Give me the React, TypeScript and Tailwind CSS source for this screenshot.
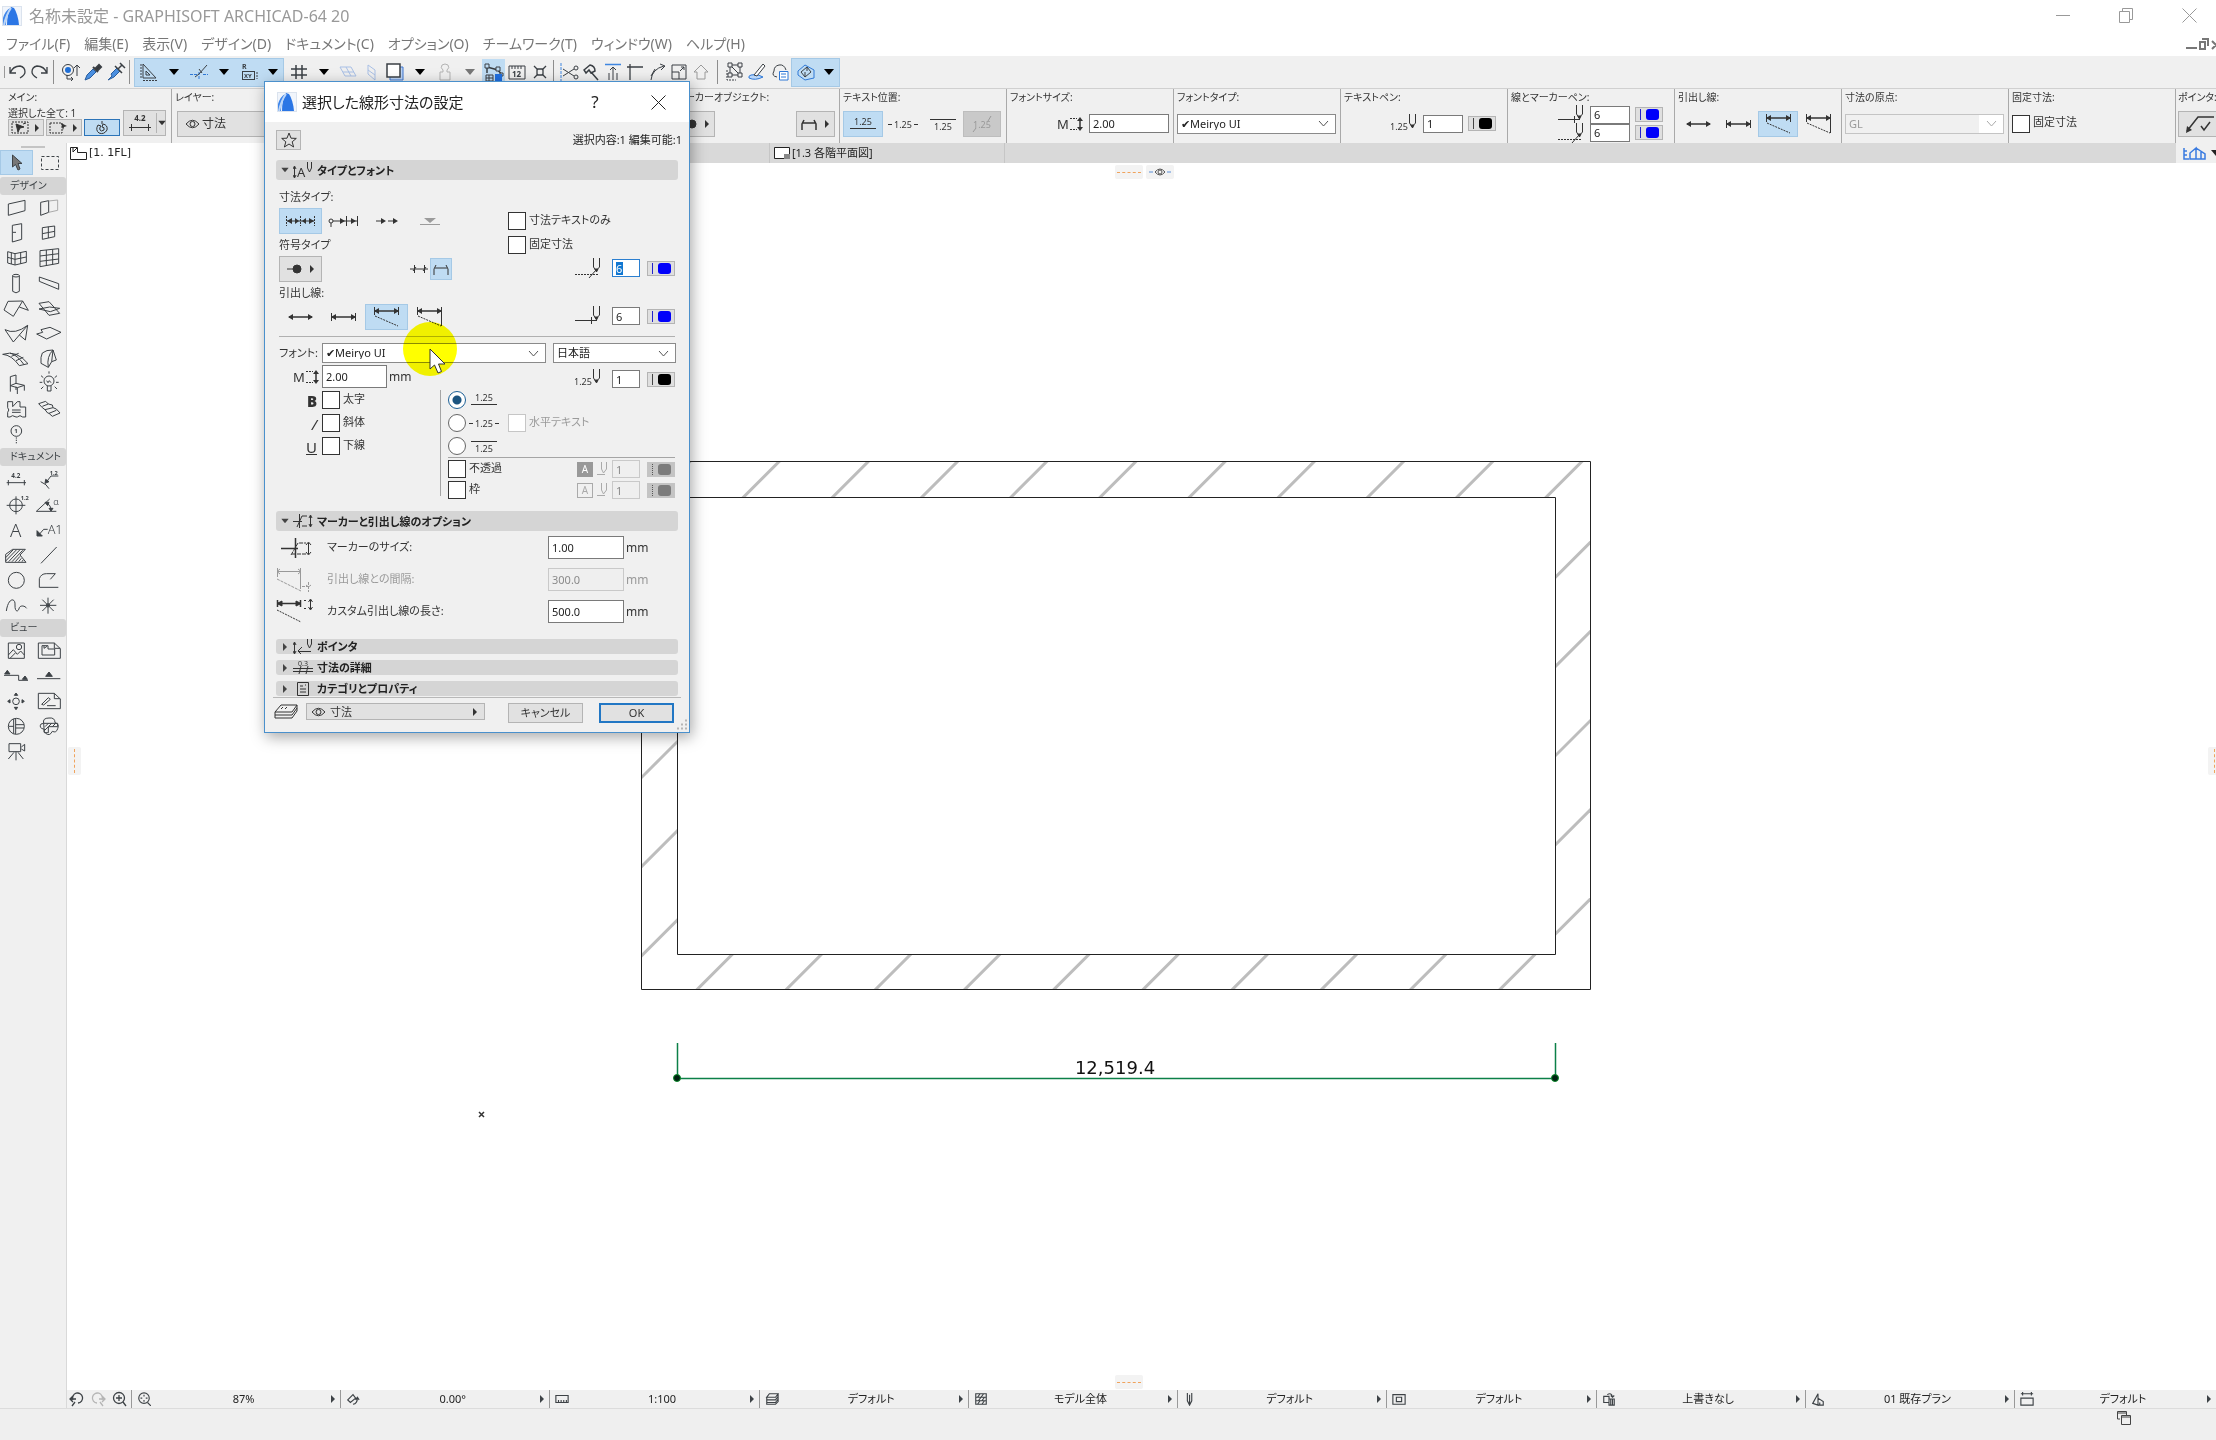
import React from 'react';
import clsx from 'clsx';

type Kids = { children?: React.ReactNode };

/* ---------- small helpers ---------- */

function Svg({ w, h, vb, className, sw = 1, children }: Kids & { w: number; h: number; vb?: string; className?: string; sw?: number }) {
  return (
    <svg
      width={w}
      height={h}
      viewBox={vb ?? `0 0 ${w} ${h}`}
      fill="none"
      stroke="currentColor"
      strokeWidth={sw}
      className={clsx('block shrink-0', className)}
      aria-hidden="true"
    >
      {children}
    </svg>
  );
}

function Tri({ dir = 'right', className }: { dir?: 'right' | 'down'; className?: string }) {
  return (
    <Svg w={10} h={10} className={className}>
      <path fill="currentColor" stroke="none" d={dir === 'right' ? 'M3 1L7 5L3 9Z' : 'M0 2H10L5 8Z'} />
    </Svg>
  );
}

function Logo() {
  return (
    <Svg w={20} h={20}>
      <rect x="0.5" y="0.5" width="19" height="19" fill="#f1f5fb" stroke="#dbe3ee" />
      <path d="M1 19V12Q3 5 8 2Q4 9 4 19Z" fill="#3f86ea" stroke="none" />
      <path d="M5 19Q5 8 9 1L12 2Q16 8 17 19Z" fill="#2b76e5" stroke="none" />
      <path d="M2 19Q4 9 9 2" stroke="#bcd6f8" strokeWidth="2" />
    </Svg>
  );
}

function Eye() {
  return (
    <Svg w={15} h={10}>
      <path d="M1 5Q7.500 -2.500 14 5Q7.500 12.500 1 5Z" />
      <circle cx="7.500" cy="5" r="2.500" />
    </Svg>
  );
}

function Pen({ color, className, disabled }: { color: 'blue' | 'black' | 'grey'; className?: string; disabled?: boolean }) {
  return (
    <button
      type="button"
      disabled={disabled}
      aria-label="ペン色"
      className={clsx('flex h-[15px] w-7 shrink-0 items-center justify-center gap-[5px] border', disabled ? 'border-[#c4c4c4] bg-[#c4c4c4]' : 'border-[#b4b4b4] bg-[#dfdfdf]', className)}
    >
      <span className={clsx('h-[11px] border-l', color === 'blue' ? 'border-[#2222cc]' : color === 'black' ? 'border-[#444]' : 'border-dotted border-[#555]')} />
      <span className={clsx('h-[11px] w-[13px] rounded-[3px]', color === 'blue' ? 'bg-[#0000fa]' : color === 'black' ? 'bg-black' : 'bg-[#7c7c7c]')} />
    </button>
  );
}

function Field({ label, value, className, disabled }: { label: string; value: string; className?: string; disabled?: boolean }) {
  return (
    <input
      aria-label={label}
      defaultValue={value}
      disabled={disabled}
      className={clsx(
        'shrink-0 border px-[3px] text-[11px] leading-3 outline-none',
        disabled ? 'border-[#c9c9c9] bg-[#efefef] text-[#8a8a8a]' : 'border-[#7a7a7a] bg-white text-[#222]',
        className,
      )}
    />
  );
}

function Drop({ label, options, className, disabled }: { label: string; options: string[]; className?: string; disabled?: boolean }) {
  return (
    <div className={clsx('relative h-5', className)}>
      <select
        aria-label={label}
        disabled={disabled}
        className={clsx(
          'block h-5 w-full appearance-none border px-[3px] text-[11px] leading-3',
          disabled ? 'border-[#c4c4c4] bg-[#f0f0f0] text-[#9a9a9a] opacity-100' : 'border-[#8a8a8a] bg-white text-[#222]',
        )}
      >
        {options.map((o) => (
          <option key={o}>{o}</option>
        ))}
      </select>
      <span className={clsx('pointer-events-none absolute top-px right-px flex h-[18px] w-6 items-center justify-center bg-white', disabled ? 'text-[#aaa]' : 'text-[#555]')}>
        <Svg w={11} h={7}>
          <path d="M1 1L5.500 6L10 1" />
        </Svg>
      </span>
    </div>
  );
}

function Check({ label, disabled, iconLabel, type = 'checkbox', checked }: { label?: string; disabled?: boolean; iconLabel?: React.ReactNode; type?: 'checkbox' | 'radio'; checked?: boolean }) {
  return (
    <label className={clsx('flex h-[18px] items-center gap-[3px] text-[11px] leading-[14px] whitespace-nowrap', disabled && 'text-[#9a9a9a]')}>
      <input
        type={type}
        name={type === 'radio' ? 'textpos' : undefined}
        defaultChecked={checked}
        disabled={disabled}
        className={clsx(
          'm-0 h-[18px] w-[18px] shrink-0 appearance-none border bg-white',
          type === 'radio' && 'rounded-full border-[#666] checked:border-[#1c5f95] checked:bg-[radial-gradient(circle,#1b5480_4px,white_5px)]',
          type === 'checkbox' && (disabled ? 'border-[#c6c6c6]' : 'border-[#333]'),
        )}
      />
      {iconLabel}
      {label && <span className="pb-[3px]">{label}</span>}
    </label>
  );
}

/* witness line variants: 0 none, 1 short, 2 custom, 3 dynamic */
function Witness({ kind, className }: { kind: number; className?: string }) {
  const y = kind < 2 ? 10 : 4;
  return (
    <Svg w={27} h={20} className={className}>
      <path d={`M2 ${y}H25`} strokeWidth="1.500" />
      <path d={`M1 ${y}L6 ${y - 3}V${y + 3}Z M26 ${y}L21 ${y - 3}V${y + 3}Z`} fill="currentColor" stroke="none" />
      {kind > 0 && <path d={`M1.500 ${y - 4}V${y + 4}M25.500 ${y - 4}V${kind === 3 ? 19 : y + 4}`} />}
      {kind > 1 && <path d="M2 9L25 19" strokeDasharray="2 1" />}
    </Svg>
  );
}

function NumText({ pos, className }: { pos: 'above' | 'mid' | 'below' | 'slash'; className?: string }) {
  return (
    <Svg w={30} h={16} className={className}>
      <text x="15" y={pos === 'above' ? 9 : pos === 'below' ? 14 : 12} fontSize="9" textAnchor="middle" fill="currentColor" stroke="none">
        1.25
      </text>
      {pos === 'above' && <path d="M2 12.500H28" />}
      {pos === 'below' && <path d="M2 3.500H28" />}
      {pos === 'mid' && <path d="M0 8.500H4M26 8.500H30" />}
      {pos === 'slash' && <path d="M6 16L9 12M21 5L24 0" />}
    </Svg>
  );
}

function SizeM() {
  return (
    <Svg w={26} h={14}>
      <text x="0" y="12" fontSize="13" fill="currentColor" stroke="none">
        M
      </text>
      <path d="M13 1.500H20M13 12.500H20" strokeDasharray="2 1" />
      <path d="M23 2V12" strokeWidth="1.500" />
      <path d="M23 0L26 4H20ZM23 14L26 10H20Z" fill="currentColor" stroke="none" />
    </Svg>
  );
}

/* marker pen, witness pen and text pen glyphs */
function PenGlyph({ kind }: { kind: 'marker' | 'line' | 'text' }) {
  return (
    <Svg w={27} h={20}>
      <path d="M18.500 0V9L21 13L24.500 9V0" />
      <path d="M20 11L21.500 14L23 11Z" fill="currentColor" />
      {kind === 'marker' && <path d="M0 16.500H24" strokeDasharray="2 1" />}
      {kind === 'marker' && <path d="M14 20L21 12" />}
      {kind === 'line' && <path d="M0 14.500H22M16.500 11V18" />}
      {kind === 'text' && (
        <text x="-1" y="16" fontSize="9" fill="currentColor" stroke="none">
          1.25
        </text>
      )}
    </Svg>
  );
}

/* ---------- toolbar ---------- */

function Tool({ label, on, children, w = 'w-[23px]' }: Kids & { label: string; on?: boolean; w?: string }) {
  return (
    <button type="button" aria-label={label} className={clsx('flex h-[27px] shrink-0 items-center justify-center', w, on && 'bg-[#bfdcf3]')}>
      {children}
    </button>
  );
}

function I20({ d, sw, className, children }: Kids & { d?: string; sw?: number; className?: string }) {
  return (
    <Svg w={20} h={20} sw={sw} className={className}>
      {d && <path d={d} />}
      {children}
    </Svg>
  );
}

const Bar = ({ className }: { className?: string }) => <span className={clsx('mr-1 ml-[2px] h-6 w-px shrink-0 bg-[#8d8d8d]', className)} />;

function Toolbar() {
  return (
    <div className="flex h-8 items-center overflow-hidden bg-[#f0f0f0] pl-1 text-[#3a3f44]">
      <span className="h-3 w-px shrink-0 bg-[#999]" />
      <Tool label="元に戻す">
        <I20 d="M3 5V11H9M3 11Q6 4 13 4Q18 5 18 10Q18 13 13 16" sw={1.3} />
      </Tool>
      <Tool label="やり直し">
        <I20 d="M17 5V11H11M17 11Q14 4 7 4Q2 5 2 10Q2 13 7 16" sw={1.3} />
      </Tool>
      <Bar />
      <Tool label="検索と選択">
        <I20>
          <circle cx="8" cy="8" r="5.500" />
          <circle cx="8" cy="8" r="3" fill="#1f6fd6" stroke="none" />
          <path d="M7 13V17H13M11 15L13 17L11 19M17 14V4M14 6L17 3L20 6" />
        </I20>
      </Tool>
      <Tool label="パラメータを取得">
        <I20>
          <path d="M2 18L4 13L10 7L13 10L7 16Z" fill="#4a8fe0" stroke="#2a5d9c" />
          <path d="M10 5L15 10M12 7L16 3L18 5L14 9Z" fill="#333" strokeWidth="2" />
        </I20>
      </Tool>
      <Tool label="パラメータを転送">
        <I20>
          <path d="M2 18L6 14L5 12L11 6L14 9L8 15Z" fill="#4a8fe0" stroke="#2a5d9c" />
          <path d="M9 4L16 11M12 7L16 3M14 1L19 6" strokeWidth="1.500" />
        </I20>
      </Tool>
      <Bar />
      <div className="flex border border-[#a5c9e6]">
        <Tool label="ガイドライン" on w="w-[28px]">
          <I20 d="M4 2V16H17ZM7 9V13H11Z">
            <path d="M4 18.500H18M2 2V16" strokeDasharray="2 1" />
          </I20>
        </Tool>
        <Tool label="ガイドラインのオプション" on w="w-[22px]">
          <Tri dir="down" className="text-black" />
        </Tool>
        <Tool label="スナップガイド" on w="w-[28px]">
          <I20>
            <path d="M1 12.500H9M10 17V9M14 12.500H19" stroke="#2f78d6" strokeDasharray="3 1" />
            <path d="M6 15L10 12L18 3M10 7L13 11" />
          </I20>
        </Tool>
        <Tool label="スナップのオプション" on w="w-[22px]">
          <Tri dir="down" className="text-black" />
        </Tool>
        <Tool label="座標情報" on w="w-[28px]">
          <I20>
            <rect x="3.500" y="9.500" width="12" height="8" />
            <text x="5" y="16" fontSize="6" fontWeight="700" fill="currentColor" stroke="none">XY</text>
            <text x="3" y="7" fontSize="7" fontWeight="700" fill="currentColor" stroke="none">R</text>
            <path d="M18 10V17" strokeDasharray="2 1" />
          </I20>
        </Tool>
        <Tool label="座標のオプション" on w="w-[20px]">
          <Tri dir="down" className="text-black" />
        </Tool>
      </div>
      <span className="w-[2px] shrink-0" />
      <Tool label="グリッド" w="w-[25px]">
        <I20 d="M7 3V17M13 3V17M2 7H18M2 13H18" sw={1.5} />
      </Tool>
      <Tool label="グリッドのオプション" w="w-[25px]">
        <Tri dir="down" className="text-black" />
      </Tool>
      <Tool label="編集面">
        <I20 d="M2 5H13L18 14H7ZM5 10H16M8 5L13 14" className="text-[#a9c0e6]" />
      </Tool>
      <Tool label="垂直面">
        <I20 d="M7 3L14 8V18L7 12ZM7 8L14 13" className="text-[#a9c0e6]" />
      </Tool>
      <Tool label="フロア" w="w-[25px]">
        <I20>
          <path d="M5 5H18V18H5Z" fill="#bcd4f5" stroke="#3f76d0" />
          <path d="M2 2H15V15H2Z" fill="#fff" strokeWidth="1.500" />
        </I20>
      </Tool>
      <Tool label="フロアのオプション" w="w-[25px]">
        <Tri dir="down" className="text-black" />
      </Tool>
      <Tool label="重力" w="w-[25px]">
        <I20 d="M5 10H8V8Q5 6 7 3Q10 1 13 3Q15 6 12 8V10H15V18H5Z" className="text-[#b3b3b3]" />
      </Tool>
      <Tool label="重力のオプション" w="w-[25px]">
        <Tri dir="down" className="text-[#777]" />
      </Tool>
      <Tool label="トレース" on>
        <I20>
          <path d="M3 5L14 8L18 13M3 5V11" strokeWidth="1.500" />
          <path d="M1 2H5V6H1ZM12 5H16V9H12ZM16 11H19V14H16Z" fill="#bfdcf3" />
          <path d="M2 13H9V19H2ZM2 16H9M5 13V19" />
          <path d="M11 12H18V19H11Z" fill="#1f6fe0" stroke="none" />
        </I20>
      </Tool>
      <Tool label="寸法測定">
        <I20>
          <path d="M2 4H18V17H2ZM5 4V7M8 4V7M11 4V7M14 4V7" />
          <text x="5" y="15" fontSize="8" fontWeight="700" fill="currentColor" stroke="none">12</text>
        </I20>
      </Tool>
      <Tool label="交点">
        <I20 d="M4 4L8 8M16 4L12 8M4 16L8 12M16 16L12 12M7 7H13V13H7Z" sw={1.3} />
      </Tool>
      <Bar />
      <Tool label="トリム" w="w-[22px]">
        <I20>
          <path d="M2 1V19" stroke="#3f86e0" strokeDasharray="3 1" />
          <path d="M4 7L15 14M4 14L15 7" />
          <circle cx="17" cy="6" r="2" />
          <circle cx="17" cy="15" r="2" />
        </I20>
      </Tool>
      <Tool label="分割" w="w-[22px]">
        <I20 d="M3 8L9 3Q14 4 14 9L10 11L8 8L5 11ZM10 10L17 18" sw={1.5} />
      </Tool>
      <Tool label="高さ調整" w="w-[22px]">
        <I20>
          <path d="M2 2.500H18" stroke="#3f86e0" strokeWidth="1.500" />
          <path d="M10 5V18M7 8L10 5L13 8M6 11V18M14 11V18" />
        </I20>
      </Tool>
      <Tool label="交差" w="w-[22px]">
        <I20 d="M5 18V5H18M5 2V5M2 5H5" sw={1.3} />
      </Tool>
      <Tool label="フィレット" w="w-[22px]">
        <I20 d="M4 18Q5 7 17 4M8 7L4 14M13 2L18 4L14 8" />
      </Tool>
      <Tool label="サイズ変更" w="w-[22px]">
        <I20 d="M3 3H17V17H3ZM3 10H10V17M11 9L15 5M12 5H15V8" />
      </Tool>
      <Tool label="屋根" w="w-[22px]">
        <I20 d="M3 10L10 3L17 10H14V17H6V10Z" className="text-[#9a9a9a]" />
      </Tool>
      <Bar className="ml-[5px]" />
      <Tool label="グループ">
        <I20>
          <path d="M6 3H16V13H6ZM6 3L16 13" />
          <path d="M3 8V18H12" strokeDasharray="2 1" />
          <path d="M4 1H8V5H4ZM14 1H18V5H14ZM4 11H8V15H4ZM14 11H18V15H14Z" fill="#f0f0f0" />
        </I20>
      </Tool>
      <Tool label="スケッチ">
        <I20>
          <path d="M2 16Q8 19 16 15Q10 11 4 13Q1 14 2 16Z" fill="#b9d7fa" stroke="#2f78d6" />
          <path d="M7 13L16 2L18 4L10 14Z" fill="#fff" />
        </I20>
      </Tool>
      <Tool label="注釈">
        <I20>
          <path d="M7 15Q1 14 4 9Q4 4 9 3Q14 2 16 8" />
          <path d="M9.500 9.500H18V18H9.500ZM11 12H16M11 15H16" fill="#fff" stroke="#2f78d6" />
        </I20>
      </Tool>
      <div className="flex border border-[#a5c9e6]">
        <Tool label="3D表示" on w="w-[27px]">
          <I20>
            <path d="M2 9L9 3L18 8V16L9 18L2 13Z" stroke="#2f78d6" />
            <path d="M5 10L11 5L15 10L9 15ZM9 15V10M11 5V9" />
          </I20>
        </Tool>
        <Tool label="3D表示のオプション" on w="w-[20px]">
          <Tri dir="down" className="text-black" />
        </Tool>
      </div>
    </div>
  );
}

/* ---------- info box ---------- */

function InfoCell({ label, children, className }: Kids & { label: string; className?: string }) {
  return (
    <div className="flex w-[167px] shrink-0 flex-col overflow-hidden border-l border-[#a9a9a9] pl-[3px]">
      <div className="h-[15px] pt-[2px] text-[10px] leading-3 whitespace-nowrap">{label}</div>
      <div className={clsx('flex flex-1 items-center', className)}>{children}</div>
    </div>
  );
}

function IBtn({ label, on, children, className }: Kids & { label: string; on?: boolean; className?: string }) {
  return (
    <button type="button" aria-label={label} className={clsx('flex h-[26px] shrink-0 items-center justify-center', on && 'border border-[#a5c9e6] bg-[#bfdcf3]', className)}>
      {children}
    </button>
  );
}

const raised = 'border border-[#b4b4b4] bg-[#e1e1e1]';

function InfoBox() {
  return (
    <div className="flex h-[55px] overflow-hidden border-t border-[#d0d0d0] bg-[#f0f0f0] text-[#333]">
      <div className="flex w-[171px] shrink-0 flex-col pl-2">
        <div className="h-4 pt-[2px] text-[10px] leading-3">メイン:</div>
        <div className="flex gap-[2px] pt-[2px]">
          <div className="w-[113px]">
            <div className="text-[10px] leading-3">選択した全て: 1</div>
            <div className="flex gap-[2px]">
              <button type="button" aria-label="全て選択" className={clsx('flex h-[17px] w-9 items-center justify-center gap-[3px]', raised)}>
                <Svg w={18} h={13}>
                  <path d="M1 1H17V12H1Z" strokeDasharray="2 1" />
                  <path d="M5 3L13 6L9 7L7 11ZM12 3L15 2" fill="currentColor" />
                </Svg>
                <Tri />
              </button>
              <button type="button" aria-label="選択方法" className={clsx('flex h-[17px] w-9 items-center justify-center gap-[3px]', raised)}>
                <Svg w={18} h={13}>
                  <path d="M1 2H13V12H1Z" strokeDasharray="2 1" />
                  <path d="M12 2L18 5L15 6L14 9Z" fill="currentColor" stroke="none" />
                </Svg>
                <Tri />
              </button>
              <button type="button" aria-label="磁石" className="flex h-[17px] w-9 items-center justify-center border border-[#2c74b8] bg-[#bfdcf3]">
                <Svg w={16} h={14}>
                  <path d="M4 4Q1 9 5 12Q10 14 13 9Q14 4 9 3L8 6Q11 6 10 9Q7 11 6 9Q5 7 7 5ZM8 0V3" />
                </Svg>
              </button>
            </div>
          </div>
          <button type="button" aria-label="寸法設定" className={clsx('mt-[3px] flex h-[26px] w-[43px] items-center', raised)}>
            <Svg w={32} h={24}>
              <text x="16" y="10" fontSize="8" fontWeight="700" textAnchor="middle" fill="currentColor" stroke="none">4.2</text>
              <path d="M5 16.500H27M7.500 13V20M24.500 13V20" />
            </Svg>
            <span className="h-5 w-px shrink-0 bg-[#b4b4b4]" />
            <Tri dir="down" className="scale-75" />
          </button>
        </div>
      </div>
      <InfoCell label="レイヤー:">
        <button type="button" className={clsx('ml-[2px] flex h-[26px] flex-1 items-center gap-[2px] pl-[7px] text-xs', raised)}>
          <Eye />
          寸法
        </button>
      </InfoCell>
      <InfoCell label="構築方法:" />
      <InfoCell label="連続寸法:" />
      <InfoCell label="マーカーオブジェクト:" className="justify-between pr-1">
        <IBtn label="マーカー" className={clsx('w-[39px] gap-1', raised)}>
          <Svg w={18} h={10}>
            <path d="M0 5H12" />
            <circle cx="12" cy="5" r="4" fill="currentColor" />
          </Svg>
          <Tri />
        </IBtn>
        <IBtn label="マーカー位置" className={clsx('w-[39px] gap-1', raised)}>
          <Svg w={18} h={14} sw={1.5}>
            <path d="M3 6H15M2 13V7L4 3M16 13V7L14 3" />
          </Svg>
          <Tri />
        </IBtn>
      </InfoCell>
      <InfoCell label="テキスト位置:">
        <IBtn label="線の上" on className="w-10">
          <NumText pos="above" />
        </IBtn>
        <IBtn label="線の中" className="w-10">
          <NumText pos="mid" />
        </IBtn>
        <IBtn label="線の下" className="w-10">
          <NumText pos="below" />
        </IBtn>
        <IBtn label="斜め" className="w-[38px] border border-[#bdbdbd] bg-[#c9c9c9] text-[#999]">
          <NumText pos="slash" />
        </IBtn>
      </InfoCell>
      <InfoCell label="フォントサイズ:" className="justify-end gap-[6px] pr-1">
        <SizeM />
        <Field label="フォントサイズ" value="2.00" className="h-[19px] w-20" />
      </InfoCell>
      <InfoCell label="フォントタイプ:" className="pr-1">
        <Drop label="フォントタイプ" options={['✔Meiryo UI']} className="flex-1" />
      </InfoCell>
      <InfoCell label="テキストペン:" className="justify-end gap-[5px] pr-[11px]">
        <PenGlyph kind="text" />
        <Field label="テキストペン" value="1" className="h-[18px] w-10" />
        <Pen color="black" />
      </InfoCell>
      <InfoCell label="線とマーカーペン:" className="justify-end pr-[11px]">
        <div className="flex flex-col">
          <div className="flex h-[18px] items-center gap-[5px]">
            <PenGlyph kind="line" />
            <Field label="線ペン" value="6" className="h-[18px] w-10" />
            <Pen color="blue" />
          </div>
          <div className="flex h-[18px] items-center gap-[5px]">
            <PenGlyph kind="marker" />
            <Field label="マーカーペン" value="6" className="h-[18px] w-10" />
            <Pen color="blue" />
          </div>
        </div>
      </InfoCell>
      <InfoCell label="引出し線:">
        <IBtn label="引出し線なし" className="w-10">
          <Witness kind={0} />
        </IBtn>
        <IBtn label="短い引出し線" className="w-10">
          <Witness kind={1} />
        </IBtn>
        <IBtn label="カスタム引出し線" on className="w-10">
          <Witness kind={2} />
        </IBtn>
        <IBtn label="動的引出し線" className="w-10">
          <Witness kind={3} />
        </IBtn>
      </InfoCell>
      <InfoCell label="寸法の原点:" className="pr-1">
        <Drop label="寸法の原点" options={['GL']} className="flex-1" disabled />
      </InfoCell>
      <InfoCell label="固定寸法:">
        <Check label="固定寸法" />
      </InfoCell>
      <div className="flex min-w-0 flex-1 flex-col overflow-hidden border-l border-[#a9a9a9] pl-[2px]">
        <div className="h-[15px] pt-[2px] text-[10px] leading-3 whitespace-nowrap">ポインタ:</div>
        <div className="flex flex-1 items-center">
          <IBtn label="ポインタ" className={clsx('w-12', raised)}>
            <Svg w={36} h={18} sw={1.5}>
              <path d="M3 16L14 2H30M17 11L20 15L26 7" />
              <path d="M2 18L3 11L8 15Z" fill="currentColor" stroke="none" />
            </Svg>
          </IBtn>
        </div>
      </div>
    </div>
  );
}

/* ---------- toolbox ---------- */

function T({ x, y, s, b, children }: Kids & { x: number; y: number; s: number; b?: boolean }) {
  return (
    <text x={x} y={y} fontSize={s} fontWeight={b ? 700 : 300} fill="currentColor" stroke="none">
      {children}
    </text>
  );
}

const designTools: [string, React.ReactNode][] = [
  ['壁', <path d="M25 27L75 16V47L25 61Z" />],
  ['壁端部', <><path d="M23 22L47 17V52L23 61Z" /><path d="M47 18L74 15V46L47 52" stroke="#aaa" /></>],
  ['ドア', <path d="M37 16L65 11V58L37 66ZM38 37H48" />],
  ['窓', <path d="M28 23L65 18V50L28 58ZM46 20V54M28 41L65 34" />],
  ['カーテンウォール', <path d="M23 20L45 26L79 19V52L45 60L23 54ZM45 26V60M34 23V57M62 22V56M23 37L45 43L79 36" />],
  ['カーテンウォールパネル', <path d="M21 17L77 11V55L21 65ZM40 15V62M59 13V59M21 33L77 26M21 49L77 42" />],
  ['柱', <><ellipse cx="48" cy="17" rx="10" ry="4" /><path d="M38 17V64Q48 73 58 64V17" /></>],
  ['梁', <path d="M19 21L77 41V58L19 34Z" />],
  ['屋根', <path d="M12 45L24 19L68 18L40 64ZM68 18L85 46L58 36" />],
  ['天窓', <path d="M18 25L48 20L80 55L48 61ZM18 42L50 36L80 40L52 50Z" />],
  ['シェル', <path d="M15 29Q45 45 83 16L76 60L58 45M15 29L40 66L83 16" />],
  ['スラブ', <path d="M11 42L29 37L24 29L51 22L84 37L41 57Z" />],
  ['メッシュ', <path d="M8 28Q50 14 84 56L58 62Q35 30 8 28ZM56 25L34 34M70 37L48 47M30 24Q52 30 72 59" />],
  ['モルフ', <path d="M28 24Q40 14 60 15L56 50L46 67L24 55Q22 35 28 24ZM60 15Q40 35 46 67M60 15L70 45L56 50" />],
  ['家具', <path d="M31 20L48 15V40M31 20V65M31 47L48 40L73 46L52 53L31 47M52 53V72M73 46V62M48 50V60" />],
  ['ランプ', <><circle cx="48" cy="33" r="15" /><path d="M43 48V63H54V48M48 4V11M24 17L31 23M72 17L65 23M20 37H28M69 37H77M24 57L31 50M72 57L65 50M41 32L45 38L49 32L54 38" /></>],
  ['ゾーン', <path d="M23 20H38V35L52 20H60V36H77V66H68Q60 58 52 66H48Q36 58 30 66H23V52Q30 45 23 38ZM36 45H62M36 52H62" />],
  ['階段', <path d="M17 26L38 19L46 27L58 30L60 38L70 42L81 54L58 64L48 55L44 54L36 44L28 38ZM28 34L46 27M36 44L60 38M48 55L70 46" />],
  ['通り芯', <><circle cx="49" cy="33" r="16" /><T x={43} y={40} s={18} b>1</T><path d="M49 52V72" strokeDasharray="4 3" /></>],
];

const docTools: [string, React.ReactNode][] = [
  ['寸法', <><path d="M20 50H78M25 42V58M73 42V58" /><T x={34} y={37} s={19} b>4.2</T></>],
  ['半径寸法', <><path d="M23 47Q42 55 48 68M40 48L54 30H76" /><path d="M36 52L38 40L48 47Z" fill="currentColor" /><T x={50} y={27} s={17} b>1.2</T></>],
  ['レベル寸法', <><circle cx="48" cy="43" r="19" /><path d="M20 43H76M48 16V70" /><T x={62} y={26} s={17} b>1.2</T></>],
  ['角度寸法', <><path d="M10 61H70M10 61L50 24M40 36Q54 42 54 58" /><path d="M36 34L48 34L44 44ZM48 52H60L54 60Z" fill="currentColor" /><T x={61} y={42} s={28}>α</T></>],
  ['テキスト', <T x={30} y={64} s={56}>A</T>],
  ['ラベル', <><path d="M18 56L32 40H44" /><path d="M12 60V44L28 60Z" fill="currentColor" /><T x={44} y={54} s={38}>A1</T></>],
  ['塗りつぶし', <path d="M17 40L38 25H76L60 42L78 64H17ZM17 50L40 26M17 60L50 26M26 62L60 26M36 62L68 28M46 62L60 46M56 62L64 52M66 62L70 56" />],
  ['線', <path d="M24 67L71 18" />],
  ['円弧/円', <circle cx="49" cy="43" r="24" />],
  ['ポリライン', <path d="M76 64H19V38Q24 23 40 23H67L52 40" />],
  ['スプライン', <path d="M19 60C25 18 47 20 45 42C44 62 54 66 58 50C62 42 75 44 80 52" />],
  ['ホットスポット', <><path d="M45 20V68M21 43H70M28 26L62 60M62 26L28 60" /><circle cx="45" cy="43" r="5" /></>],
];

const viewTools: [string, React.ReactNode][] = [
  ['図', <><path d="M25 18H73V64H25ZM25 54L40 38L52 52L62 42L73 54M30 64L46 48" /><circle cx="57" cy="30" r="8" /></>],
  ['図面', <path d="M16 18H64L82 35V64H16ZM64 18V34H82M27 26H45V36H65V54H27ZM33 26V34L42 28" />],
  ['断面図', <><path d="M12 40H56V55H84" /><path d="M22 25L14 36H30ZM75 42L67 52H82Z" fill="currentColor" /></>],
  ['立面図', <><path d="M12 50H82" /><path d="M48 30L38 43H58Z" fill="currentColor" /></>],
  ['展開図', <><circle cx="48" cy="43" r="10" /><path d="M48 18L43 25H53ZM48 68L43 61H53ZM23 43L30 38V48ZM73 43L66 38V48Z" fill="currentColor" /></>],
  ['ワークシート', <path d="M16 19H64L82 36V65H16ZM64 19V35H82M26 52L46 32L52 37L32 54ZM42 56H68" />],
  ['詳細', <><circle cx="49" cy="43" r="24" /><path d="M41 21V65M47 20V66M47 38H72M47 48H72M26 43H41" /></>],
  ['変更', <><path d="M32 34Q28 18 48 18Q66 16 66 32Q80 36 74 50Q70 64 58 58Q50 74 38 64Q30 58 34 52Q16 48 24 36Z" /><path d="M32 34H74V44H46V62H34ZM36 44L46 34M46 44L56 34M58 44L68 34M34 56L46 44" /></>],
  ['カメラ', <path d="M27 20H62V44H27ZM64 30L74 22V42L64 36M48 44V70M42 46L25 66M54 46L70 66" />],
];

function ToolGroup({ title, tools }: { title: string; tools: [string, React.ReactNode][] }) {
  return (
    <section className="mb-[3px]">
      <h2 className="h-[18px] rounded-[3px] bg-[#d5d5d5] pl-[10px] text-[10px] leading-4 whitespace-nowrap">{title}</h2>
      <div className="grid grid-cols-2">
        {tools.map(([name, art]) => (
          <button key={name} type="button" aria-label={name} className="h-[25px]">
            <Svg w={33} h={25} vb="0 0 99 75" sw={3}>
              {art}
            </Svg>
          </button>
        ))}
      </div>
    </section>
  );
}

function Toolbox() {
  return (
    <aside className="w-[67px] shrink-0 border-r border-[#d9d9d9] bg-[#f0f0f0] text-[#3d4246]">
      <div className="flex h-[7px] items-center justify-center">
        <span className="h-[2px] w-6 bg-[#c4c4c4]" />
      </div>
      <div className="mb-[2px] grid h-[25px] grid-cols-2">
        <button type="button" aria-label="矢印" className="flex items-center justify-center border border-[#a5c9e6] bg-[#bfdcf3]">
          <Svg w={12} h={17}>
            <path d="M1.500 1V13L4.500 10.500L7 16L9 15L7 9.500H11Z" fill="#777" />
          </Svg>
        </button>
        <button type="button" aria-label="矩形選択" className="flex items-center justify-center">
          <Svg w={18} h={14}>
            <path d="M0.500 0.500H17.500V13.500H0.500Z" strokeDasharray="3 2" />
          </Svg>
        </button>
      </div>
      <ToolGroup title="デザイン" tools={designTools} />
      <ToolGroup title="ドキュメント" tools={docTools} />
      <ToolGroup title="ビュー" tools={viewTools} />
    </aside>
  );
}

/* ---------- floor plan ---------- */

function Plan() {
  const hatch = Array.from({ length: 18 }, (_, k) => 973 + k * 89.2);
  return (
    <svg width="1600" height="1000" viewBox="67 163 1600 1000" fill="none" className="absolute top-0 left-0" aria-label="各階平面図">
      <clipPath id="wall">
        <path clipRule="evenodd" d="M642 462H1590V989H642ZM677 497V954H1555V497Z" />
      </clipPath>
      <g clipPath="url(#wall)" stroke="#bdbdbd" strokeWidth="3">
        {hatch.map((c) => (
          <path key={c} d={`M${c - 400} 400L${c - 1050} 1050`} />
        ))}
      </g>
      <path d="M641.500 461.500H1590.500V989.500H641.500ZM677.500 497.500H1555.500V954.500H677.500Z" stroke="#222" />
      <path d="M677.500 1043V1078M1555.500 1043V1078M677 1078.500H1555" stroke="#0c8048" strokeWidth="1.500" />
      <circle cx="677" cy="1078" r="3.500" fill="#021" stroke="#0a8a2a" />
      <circle cx="1555" cy="1078" r="3.500" fill="#021" stroke="#0a8a2a" />
      <text x="1115" y="1074" textAnchor="middle" fontSize="18" fill="#111" className="font-['DejaVu_Sans',sans-serif]">
        12,519.4
      </text>
      <path d="M479 1112L484 1117M484 1112L479 1117" stroke="#333" strokeWidth="1.500" />
    </svg>
  );
}

function Dashes({ vertical }: { vertical?: boolean }) {
  return vertical ? (
    <span className="flex h-7 items-center justify-center rounded-[2px] bg-[#f3f3f3] px-[6px]">
      <span className="h-6 border-l border-dashed border-[#f0a35c]" />
    </span>
  ) : (
    <span className="flex h-[14px] w-7 items-center justify-center rounded-[2px] bg-[#f3f3f3]">
      <span className="w-6 border-t border-dashed border-[#f0a35c]" />
    </span>
  );
}

function Canvas() {
  return (
    <main className="relative min-h-0 flex-1 overflow-hidden bg-white">
      <Plan />
      <div className="absolute top-[2px] left-[1048px] flex gap-[3px]">
        <Dashes />
        <span className="flex h-[14px] w-7 items-center justify-center rounded-[2px] bg-[#f3f3f3] text-[#555]">
          <Svg w={22} h={10}>
            <path d="M0 5H4M18 5H22" stroke="#5b8fd8" />
            <path d="M6 5Q11 -1 16 5Q11 11 6 5Z" />
            <circle cx="11" cy="5" r="2" />
          </Svg>
        </span>
      </div>
      <div className="absolute bottom-px left-[1048px]">
        <Dashes />
      </div>
      <div className="absolute top-[584px] left-[1px]">
        <Dashes vertical />
      </div>
      <div className="absolute top-[584px] -right-[5px]">
        <Dashes vertical />
      </div>
    </main>
  );
}

/* ---------- status bar ---------- */

const quick: [string, React.ReactNode][] = [
  ['87%', <><circle cx="8" cy="7" r="6" /><path d="M12 12L16 16M8 3V5M8 9V11M4 7H6M10 7H12" /></>],
  ['0.00°', <path d="M2 9L8 3L11 7L5 12ZM8 14Q13 13 13 7M11 9L13 6L15 9" />],
  ['1:100', <path d="M1 4H15V12H1ZM4 12V9M7 12V9M10 12V9M13 12V9" />],
  ['デフォルト', <path d="M5 2H15L12 6H2ZM2 6V9H12L15 5M2 9V12H12L15 8M2 12V14H12L15 11V2" />],
  ['モデル全体', <path d="M2 2H14V14H2ZM2 6H14M2 10H14M4 6L7 2M8 6L11 2M5 10L8 6M9 10L12 6M4 14L7 10M9 14L12 10" />],
  ['デフォルト', <path d="M5 1V10L7.500 15L10 10V1M7.500 3V15" />],
  ['デフォルト', <path d="M1 3H15V14H1ZM5 6H11V11H5Z" />],
  ['上書きなし', <path d="M2 5H8V12H2ZM8 8H14V15H8ZM10 8V15M12 8V15M6 3Q11 0 12 6M10 4L12 6L14 4" />],
  ['01 既存プラン', <path d="M2 13L8 2V15ZM8 7L14 11V15H8M10 12V15" />],
  ['デフォルト', <path d="M1 2H15M3 0V4M13 0V4M1 7H15V15H1Z" />],
];

function StatusBar() {
  return (
    <footer className="flex h-[18px] items-center overflow-hidden bg-[#f0f0f0] text-[#3d4246]">
      <div className="flex h-full w-16 shrink-0 items-center gap-[5px] pl-[2px]">
        <button type="button" aria-label="前のズーム">
          <Svg w={16} h={16} sw={1.3}>
            <path d="M4 9A5 5 0 1 1 9 12M1 8H7M4 5L1 8L4 11M6 11L3 15" />
          </Svg>
        </button>
        <button type="button" aria-label="次のズーム" className="text-[#b5b5b5]">
          <Svg w={16} h={16} sw={1.3}>
            <path d="M12 9A5 5 0 1 0 7 12M9 8H15M12 5L15 8L12 11M10 11L13 15" />
          </Svg>
        </button>
        <button type="button" aria-label="ズームイン">
          <Svg w={16} h={16} sw={1.3}>
            <circle cx="8" cy="7" r="5.500" />
            <path d="M12 11L15 15M8 4V10M5 7H11" />
          </Svg>
        </button>
      </div>
      {quick.map(([text, art], i) => (
        <button
          key={i}
          type="button"
          className={clsx('flex h-full items-center border-l border-[#999] pl-[5px] text-[11px]', i === quick.length - 1 ? 'w-[202px] shrink-0' : 'min-w-0 flex-1')}
        >
          <Svg w={14} h={14} vb="0 0 16 16" sw={1.3}>{art}</Svg>
          <span className="flex-1 pl-2 text-center leading-4 text-[#222]">{text}</span>
          <Tri className="mr-[2px]" />
        </button>
      ))}
    </footer>
  );
}

/* ---------- settings dialog ---------- */

function Fold({ title, open, icon }: { title: string; open?: boolean; icon: React.ReactNode }) {
  return (
    <button type="button" aria-expanded={!!open} className={clsx('flex w-full items-center overflow-hidden rounded-[3px] bg-[#d5d5d5] pl-1 text-left', open ? 'h-5' : 'h-[15px]')}>
      <Tri dir={open ? 'down' : 'right'} className={clsx('text-[#444]', open && 'scale-75')} />
      <Svg w={20} h={16} className="ml-[3px]">
        {icon}
      </Svg>
      <span className="ml-1 text-[11px] leading-[15px] font-bold text-[#222]">{title}</span>
    </button>
  );
}

function DBtn({ label, on, children, className }: Kids & { label: string; on?: boolean; className?: string }) {
  return (
    <button type="button" aria-label={label} className={clsx('flex h-[26px] w-[43px] shrink-0 items-center justify-center', on && 'border border-[#a5c9e6] bg-[#bfdcf3]', className)}>
      {children}
    </button>
  );
}

function PenRow({ kind, value, color, selected }: { kind: 'marker' | 'line' | 'text'; value: string; color: 'blue' | 'black'; selected?: boolean }) {
  return (
    <div className="flex h-[18px] items-center justify-end">
      <PenGlyph kind={kind} />
      {selected ? (
        <span className="ml-[10px] flex h-[18px] w-7 items-center border border-[#2b7fd0] bg-white px-[3px]">
          <input aria-label="ペン番号" defaultValue={value} className="h-[13px] w-[7px] bg-[#1177d1] text-[11px] leading-3 text-white outline-none" />
        </span>
      ) : (
        <Field label="ペン番号" value={value} className="ml-[10px] h-[18px] w-7" />
      )}
      <Pen color={color} className="ml-[7px]" />
    </div>
  );
}

function TypePanel() {
  return (
    <div className="flex justify-between pt-[6px] pr-[3px] pl-[3px]">
      <div className="text-[11px] leading-[22px]">
        <div>寸法タイプ:</div>
        <div className="flex">
          <DBtn label="線形" on>
            <Svg w={31} h={12}>
              <path d="M1.500 1V11M15.500 1V11M29.500 1V11" strokeDasharray="2 1" />
              <path d="M2 6H29" />
              <path d="M2 6L7 3V9ZM14 6L10 3V9ZM17 6L21 3V9ZM29 6L24 3V9Z" fill="currentColor" stroke="none" />
            </Svg>
          </DBtn>
          <DBtn label="累積">
            <Svg w={31} h={12}>
              <circle cx="3" cy="6" r="2" />
              <path d="M5 6H29M3 8V12M18.500 1V11M29.500 1V11" />
              <path d="M17 6L12 3V9ZM28 6L23 3V9Z" fill="currentColor" stroke="none" />
            </Svg>
          </DBtn>
          <DBtn label="ベースライン">
            <Svg w={22} h={12}>
              <path d="M0 6H6M12 6H18" />
              <path d="M10 6L5 3V9ZM22 6L17 3V9Z" fill="currentColor" stroke="none" />
            </Svg>
          </DBtn>
          <DBtn label="高さ">
            <Svg w={22} h={12} className="text-[#9b9b9b]">
              <path d="M1 9.500H21" />
              <path d="M5 3H17L11 8Z" fill="currentColor" stroke="none" />
            </Svg>
          </DBtn>
        </div>
        <div>符号タイプ</div>
        <div className="flex items-center">
          <DBtn label="マーカー" className={clsx('gap-1', raised)}>
            <Svg w={18} h={10}>
              <path d="M2 5H16" />
              <circle cx="12" cy="5" r="4" fill="currentColor" />
            </Svg>
            <Tri />
          </DBtn>
          <button type="button" aria-label="線を延長" className="ml-[86px] flex h-[22px] w-[22px] items-center justify-center">
            <Svg w={18} h={12}>
              <path d="M0 6H18M4.500 2V10M14.500 2V10M3 8L6 4M13 8L16 4" />
            </Svg>
          </button>
          <button type="button" aria-label="線を止める" className="flex h-[22px] w-[22px] items-center justify-center border border-[#a5c9e6] bg-[#bfdcf3]">
            <Svg w={18} h={12}>
              <path d="M3 5H15M2 12V6L4 2M16 12V6L14 2" />
            </Svg>
          </button>
        </div>
        <div>引出し線:</div>
        <div className="flex">
          <DBtn label="引出し線なし">
            <Witness kind={0} />
          </DBtn>
          <DBtn label="短い引出し線">
            <Witness kind={1} />
          </DBtn>
          <DBtn label="カスタム引出し線" on>
            <Witness kind={2} />
          </DBtn>
          <DBtn label="動的引出し線">
            <Witness kind={3} />
          </DBtn>
        </div>
      </div>
      <div className="flex w-[167px] flex-col pt-[26px]">
        <Check label="寸法テキストのみ" />
        <div className="h-[6px]" />
        <Check label="固定寸法" />
        <div className="h-[5px]" />
        <PenRow kind="marker" value="6" color="blue" selected />
        <div className="h-[30px]" />
        <PenRow kind="line" value="6" color="blue" />
      </div>
    </div>
  );
}

function StyleRow({ glyph, label }: { glyph: React.ReactNode; label: string }) {
  return (
    <div className="flex h-[18px] gap-[5px] pl-[22px]">
      <span className="w-4 text-right text-[15px] leading-5">{glyph}</span>
      <Check label={label} />
    </div>
  );
}

function BoxRow({ label, filled }: { label: string; filled?: boolean }) {
  return (
    <div className="flex items-center">
      <Check label={label} />
      <span className={clsx('mr-1 ml-auto flex h-[15px] w-4 items-center justify-center border text-[10px] leading-3', filled ? 'border-[#999] bg-[#999] text-white' : 'border-[#aaa] text-[#aaa]')}>A</span>
      <Svg w={12} h={14} className="text-[#aaa]">
        <path d="M4.500 0V7L6.500 11L9.500 7V0M0 12.500H8" />
      </Svg>
      <Field label={`${label}ペン`} value="1" disabled className="ml-[3px] h-[18px] w-7" />
      <Pen color="grey" disabled className="ml-[7px]" />
    </div>
  );
}

function FontPanel() {
  return (
    <div className="pl-[3px]">
      <div className="mt-[6px] mr-[3px] h-px bg-[#b0b0b0]" />
      <div className="flex items-center pt-[6px] pr-[2px] text-[11px] leading-5">
        <span className="w-[43px] shrink-0">フォント:</span>
        <Drop label="フォント" options={['✔Meiryo UI']} className="w-[224px]" />
        <Drop label="文字セット" options={['日本語']} className="ml-[7px] w-[123px]" />
      </div>
      <div className="flex h-[27px] items-center pr-[3px]">
        <span className="w-[43px] pl-[14px]">
          <SizeM />
        </span>
        <Field label="文字高さ" value="2.00" className="h-[23px] w-[65px]" />
        <span className="ml-[2px] text-xs">mm</span>
        <div className="ml-auto pt-[5px]">
          <PenRow kind="text" value="1" color="black" />
        </div>
      </div>
      <div className="flex">
        <div className="flex h-[106px] w-[162px] shrink-0 flex-col gap-[5px] border-r border-[#a5a5a5] pt-px">
          <StyleRow glyph={<b className="font-black">B</b>} label="太字" />
          <StyleRow glyph={<i>/</i>} label="斜体" />
          <StyleRow glyph={<u>U</u>} label="下線" />
        </div>
        <div className="flex-1 pt-px pr-[3px] pl-[7px]">
          <div className="flex flex-col gap-[5px]">
            <Check type="radio" checked iconLabel={<NumText pos="above" />} />
            <div className="flex gap-[9px]">
              <Check type="radio" iconLabel={<NumText pos="mid" />} />
              <Check label="水平テキスト" disabled />
            </div>
            <Check type="radio" iconLabel={<NumText pos="below" />} />
          </div>
          <div className="mt-[2px] mb-[2px] h-px bg-[#a5a5a5]" />
          <BoxRow label="不透過" filled />
          <div className="h-[3px]" />
          <BoxRow label="枠" />
        </div>
      </div>
    </div>
  );
}

function SizeRow({ label, value, disabled, children }: Kids & { label: string; value: string; disabled?: boolean }) {
  return (
    <label className={clsx('flex h-[23px] items-center text-[11px]', disabled ? 'text-[#999]' : 'text-[#333]')}>
      <Svg w={38} h={26}>
        {children}
      </Svg>
      <span className="ml-[13px] w-[221px] shrink-0">{label}</span>
      <Field label={label} value={value} disabled={disabled} className="h-[23px] w-[76px]" />
      <span className="ml-[2px] text-xs">mm</span>
    </label>
  );
}

function SettingsDialog() {
  return (
    <div role="dialog" aria-label="選択した線形寸法の設定" className="absolute top-[81px] left-[264px] w-[426px] border border-[#4a90cc] bg-[#f0f0f0] text-[#333] shadow-[2px_4px_14px_rgba(0,0,0,0.35)]">
      <div className="flex h-10 items-center bg-white pr-[23px] pl-3 text-[#222]">
        <Logo />
        <h1 className="ml-[5px] flex-1 text-[15px]">選択した線形寸法の設定</h1>
        <button type="button" aria-label="ヘルプ" className="mr-11 w-6 text-[17px]">
          ?
        </button>
        <button type="button" aria-label="閉じる">
          <Svg w={15} h={15}>
            <path d="M0.500 0.500L14.500 14.500M14.500 0.500L0.500 14.500" />
          </Svg>
        </button>
      </div>
      <div className="px-[11px]">
        <div className="flex h-[38px] items-center justify-between pb-[2px]">
          <button type="button" aria-label="お気に入り" className={clsx('flex h-5 w-[25px] items-center justify-center', raised)}>
            <Svg w={16} h={16}>
              <path d="M8 1L10 6.200L15.300 6.400L11.200 9.800L12.600 15L8 12L3.400 15L4.800 9.800L0.700 6.400L6 6.200Z" />
            </Svg>
          </button>
          <span className="-mr-1 text-[11px] text-[#222]">選択内容:1 編集可能:1</span>
        </div>
        <Fold
          open
          title="タイプとフォント"
          icon={
            <>
              <path d="M1.500 5V15M0 7L1.500 4L3 7M0 13L1.500 16L3 13M14.500 0V6L16.500 10L18.500 6V0" />
              <text x="4" y="15" fontSize="13" fill="currentColor" stroke="none">A</text>
            </>
          }
        />
        <TypePanel />
        <FontPanel />
        <div className="mt-3">
          <Fold open title="マーカーと引出し線のオプション" icon={<path d="M0 8.500H9M6.500 1V15M4 14L9 3H14M14 13H9M17.500 3V13M16 5L17.500 2L19 5M16 11L17.500 14L19 11" />} />
        </div>
        <div className="flex flex-col gap-[9px] pt-[5px]">
          <SizeRow label="マーカーのサイズ:" value="1.00">
            <path d="M5 13.500H22M19.500 3V23" strokeWidth="1.500" />
            <path d="M15 20L22 8H30M30 19H16" strokeDasharray="4 1" />
            <path d="M32.500 8V19M30 10L32.500 7L35 10M30 17L32.500 20L35 17" />
          </SizeRow>
          <SizeRow label="引出し線との間隔:" value="300.0" disabled>
            <path d="M1 4.500H25M1.500 1V10M24.500 1V22M4 2L1 4.500L4 7M22 2L25 4.500L22 7" />
            <path d="M1 12L25 24M26 19.500H34M32.500 15V25M30 18L32.500 20L35 18" strokeDasharray="3 1" />
          </SizeRow>
          <SizeRow label="カスタム引出し線の長さ:" value="500.0">
            <path d="M1 4.500H25M1.500 1V8M24.500 1V8" strokeWidth="1.500" />
            <path d="M1 4.500L6 2V7ZM25 4.500L20 2V7Z" fill="currentColor" />
            <path d="M1 11L25 23M28 1.500H31M28 9.500H31" strokeDasharray="2 1" />
            <path d="M34.500 1V10M32.500 3L34.500 0L36.500 3M32.500 8L34.500 11L36.500 8" />
          </SizeRow>
        </div>
        <div className="mt-4 flex flex-col gap-[6px]">
          <Fold title="ポインタ" icon={<path d="M1.500 4V14M0 6L1.500 3L3 6M0 12L1.500 15L3 12M18 12.500H6M9 8L5 12L9 16M14.500 0V5L16.500 9L18.500 5V0" />} />
          <Fold
            title="寸法の詳細"
            icon={
              <>
                <path d="M0 8.500H20M0 11.500H20M6 14L8 6M13 14L15 6" />
                <text x="5" y="6" fontSize="7" fill="currentColor" stroke="none">0.3</text>
              </>
            }
          />
          <Fold title="カテゴリとプロパティ" icon={<path d="M4.500 1.500H15.500V14.500H4.500ZM7 5H10M7 8H13M7 11H13M12 4H13" />} />
        </div>
      </div>
      <div className="mx-2 mt-px h-px bg-[#b8b8b8]" />
      <div className="flex items-start pt-[5px] pr-[15px] pb-[9px] pl-[9px]">
        <Svg w={24} h={17}>
          <path d="M7 2H23L18 9H1ZM1 9V12H18L23 5M1 12V15H18L23 8M23 2V8M7 6L9 4M11 6L13 4" />
        </Svg>
        <button type="button" className={clsx('ml-2 flex h-[17px] w-[179px] items-center px-1 text-[11px] leading-3', raised)}>
          <Eye />
          <span className="ml-1 flex-1 text-left">寸法</span>
          <Tri />
        </button>
        <button type="button" className={clsx('ml-[23px] h-5 w-[75px] text-[11px] leading-4', raised)}>
          キャンセル
        </button>
        <button type="button" className="ml-4 h-5 w-[75px] border-2 border-[#2277c4] bg-[#e1e1e1] text-[11px] leading-4">
          OK
        </button>
      </div>
      <Svg w={12} h={12} className="absolute right-px bottom-px text-[#b5b5b5]">
        <path d="M9 1.500H11M5 5.500H7M9 5.500H11M1 9.500H3M5 9.500H7M9 9.500H11" strokeWidth="2" />
      </Svg>
      {/* click highlight and pointer */}
      <span className="pointer-events-none absolute top-[240px] left-[138px] h-[54px] w-[54px] rounded-full bg-[#ffff00] mix-blend-multiply" />
      <Svg w={18} h={26} className="pointer-events-none absolute top-[266px] left-[164px] text-[#333]">
        <path d="M1 1V21L5.500 17L9 25L12.500 23.500L9.500 16H16Z" fill="#fff" />
      </Svg>
    </div>
  );
}

/* ---------- window ---------- */

const menus = ['ファイル(F)', '編集(E)', '表示(V)', 'デザイン(D)', 'ドキュメント(C)', 'オプション(O)', 'チームワーク(T)', 'ウィンドウ(W)', 'ヘルプ(H)'];

export default function App() {
  return (
    <div className="relative flex min-h-screen flex-col overflow-hidden bg-white font-['Noto_Sans','Noto_Sans_CJK_JP',sans-serif] text-[#222] [font-feature-settings:'palt']">
      <header>
        <div className="flex h-[31px] items-center pr-[19px] pl-[2px] text-[#999]">
          <Logo />
          <span className="ml-[7px] flex-1 text-[16px]">名称未設定 - GRAPHISOFT ARCHICAD-64 20</span>
          <div className="flex gap-12">
            <button type="button" aria-label="最小化">
              <Svg w={15} h={15}>
                <path d="M0 7.500H14" />
              </Svg>
            </button>
            <button type="button" aria-label="元のサイズに戻す">
              <Svg w={15} h={15}>
                <path d="M0.500 3.500H10.500V14.500H0.500ZM3.500 3V0.500H13.500V11.500H11" />
              </Svg>
            </button>
            <button type="button" aria-label="閉じる">
              <Svg w={15} h={15}>
                <path d="M0.500 0.500L14.500 14.500M14.500 0.500L0.500 14.500" />
              </Svg>
            </button>
          </div>
        </div>
        <nav className="flex h-[25px] items-center gap-[14px] overflow-hidden pl-[6px] text-sm whitespace-nowrap text-[#777]">
          {menus.map((m) => (
            <button key={m} type="button">
              {m}
            </button>
          ))}
          <Svg w={30} h={14} sw={2} className="ml-auto">
            <path d="M0 11H11M14 5H19V12H14ZM16 2H22V9M26 4L34 12M34 4L26 12" />
          </Svg>
        </nav>
        <Toolbar />
        <InfoBox />
      </header>
      <div className="flex min-h-0 flex-1">
        <Toolbox />
        <div className="flex min-w-0 flex-1 flex-col">
          <div className="flex h-5 items-center bg-[#d9d9d9] text-[11px] whitespace-nowrap">
            <div className="flex h-full w-[351px] shrink-0 items-center gap-[2px] bg-white pl-[3px]">
              <Svg w={17} h={13}>
                <path d="M0.500 0.500H7.500V5.500H16.500V12.500H0.500ZM3 1V5L7 1" />
              </Svg>
              <span className="font-['DejaVu_Sans',sans-serif]">[1. 1FL]</span>
            </div>
            <div className="h-full w-[351px] shrink-0 border-l border-[#c6c6c6]" />
            <div className="flex h-full w-[236px] shrink-0 items-center gap-[2px] border-r border-l border-[#c6c6c6] pl-1">
              <Svg w={16} h={12}>
                <path d="M0.500 0.500H15.500V11.500H0.500Z" fill="#fff" />
                <path d="M10 7H16V12H10Z" fill="#888" stroke="none" />
              </Svg>
              [1.3 各階平面図]
            </div>
            <div className="ml-auto flex h-full w-10 items-center gap-1 bg-[#f0f0f0] pl-[6px]">
              <Svg w={25} h={14} className="text-[#3a7be0]" sw={1.5}>
                <path d="M2 2V13H7M2 5H5M2 9H5M8 13V7L14 2V13ZM14 2L23 8V13H8M19 6V13" />
              </Svg>
              <Tri dir="down" />
            </div>
          </div>
          <Canvas />
          <StatusBar />
        </div>
      </div>
      <div className="flex h-8 justify-end border-t border-[#dcdcdc] bg-[#efefef] pt-[2px] pr-[85px] text-[#444]">
        <Svg w={14} h={14}>
          <path d="M3 8H0.500V0.500H9.500V4M4.500 4.500H13.500V13.500H4.500ZM4.500 6H13.500M0.500 2H9" />
        </Svg>
      </div>
      <SettingsDialog />
    </div>
  );
}
